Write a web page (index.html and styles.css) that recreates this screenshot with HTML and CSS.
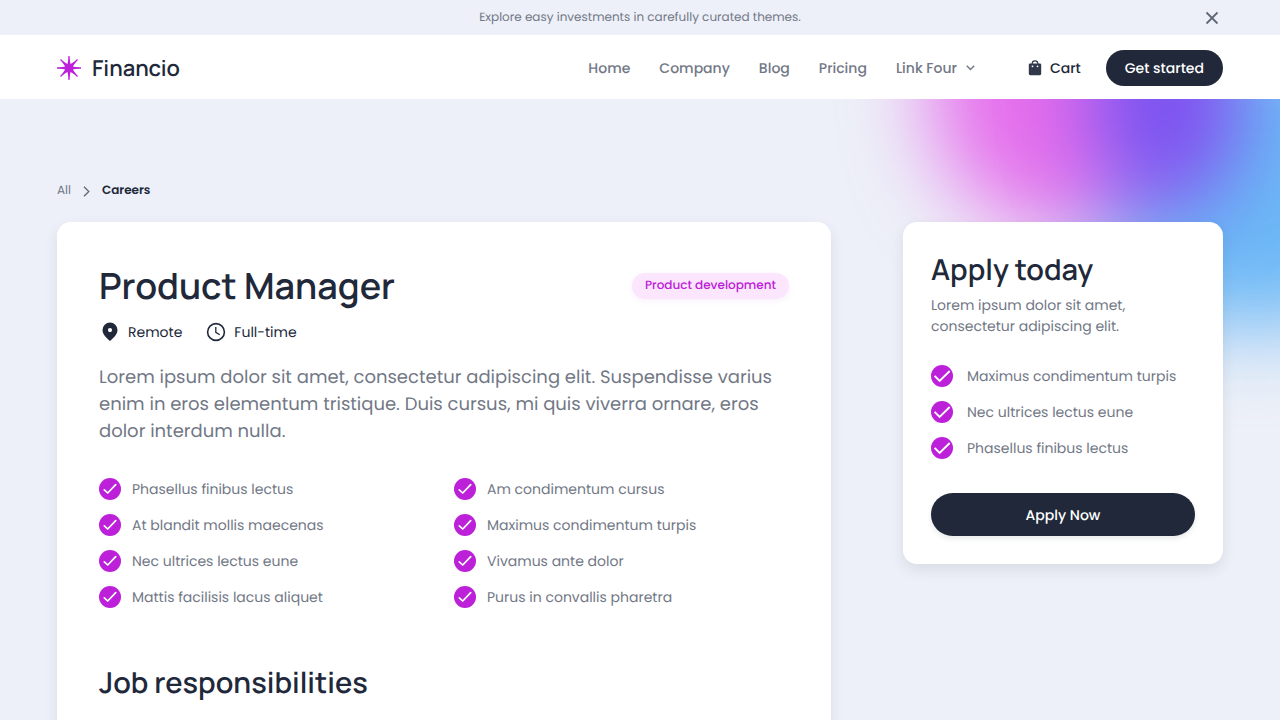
FILE: index.html
```html
<!DOCTYPE html>
<html lang="en">
<head>
<meta charset="utf-8">
<meta name="viewport" content="width=device-width, initial-scale=1">
<title>Product Manager – Financio</title>
<link rel="stylesheet" href="styles.css">
</head>
<body>
<svg class="sprite" aria-hidden="true">
  <symbol id="check" viewBox="0 0 22 22"><circle cx="11" cy="11" r="11" fill="#bc20d8"/><path d="M5.3 11.8l3.4 3.2 8-8.4" fill="none" stroke="#fff" stroke-width="1.7" stroke-linecap="round" stroke-linejoin="round"/></symbol>
  <symbol id="check-large" viewBox="0 0 22 22"><circle cx="11" cy="11" r="11" fill="#bc20d8"/><path d="M3.6 10.9l5 5.1L18.7 6" fill="none" stroke="#fff" stroke-width="1.9"/></symbol>
</svg>
<div class="announce">
  <p class="announce-text">Explore easy investments in carefully curated themes.</p>
  <button class="announce-close" type="button" aria-label="Close"><svg width="14" height="14" viewBox="0 0 14 14"><path d="M1.5 1.5l11 11M12.5 1.5l-11 11" stroke="#606776" stroke-width="1.8"/></svg></button>
</div>
<header class="header">
  <a class="brand" href="#">
    <svg width="24" height="24" viewBox="0 0 24 24" fill="#bc20d8" stroke="#bc20d8"><path d="M12 0v24M0 12h24M3.500 3.500l17 17M20.500 3.500l-17 17" stroke-width="1.300"/><path stroke="none" d="M12 1l1.600 7.100 6.200-3.900-3.900 6.200L23 12l-7.100 1.600 3.900 6.200-6.200-3.900L12 23l-1.600-7.100-6.200 3.900 3.900-6.200L1 12l7.100-1.600-3.900-6.200 6.200 3.900z"/></svg>
    <span class="brand-name">Financio</span>
  </a>
  <nav class="nav">
    <a href="#">Home</a>
    <a href="#">Company</a>
    <a href="#">Blog</a>
    <a href="#">Pricing</a>
    <button class="nav-menu" type="button">Link Four<svg width="9" height="6" viewBox="0 0 9 6"><path d="M.8.8l3.700 3.700L8.200.8" fill="none" stroke="#727886" stroke-width="1.500"/></svg></button>
  </nav>
  <a class="cart" href="#"><svg width="14" height="16" viewBox="0 0 14 16"><path d="M4.200 5V3.600a2.800 2.800 0 0 1 5.600 0V5" fill="none" stroke="#30384a" stroke-width="1.300"/><path d="M2 3.600h10a1.200 1.200 0 0 1 1.200 1.200v9a1.400 1.400 0 0 1-1.400 1.400H2.200a1.400 1.400 0 0 1-1.400-1.400v-9A1.200 1.200 0 0 1 2 3.600z" fill="#30384a"/><circle cx="4.500" cy="6.300" r=".9" fill="#fff"/><circle cx="9.500" cy="6.300" r=".9" fill="#fff"/></svg>Cart</a>
  <a class="button button-small" href="#">Get started</a>
</header>
<main class="page">
  <div class="glow" aria-hidden="true"><i class="blob blob-blue"></i><i class="blob blob-pink"></i><i class="blob blob-purple"></i></div>
  <nav class="crumbs" aria-label="Breadcrumb">
    <a href="#">All</a>
    <svg width="7" height="11" viewBox="0 0 7 11"><path d="M1 .8l4.800 4.700L1 10.200" fill="none" stroke="#606776" stroke-width="1.300"/></svg>
    <a class="current" href="#">Careers</a>
  </nav>
  <div class="columns">
    <article class="card job">
      <div class="job-head">
        <h1>Product Manager</h1>
        <span class="tag">Product development</span>
      </div>
      <div class="meta">
        <span class="meta-item"><svg width="22" height="22" viewBox="0 0 22 22"><path fill-rule="evenodd" d="M11 1.600a7.500 7.500 0 0 0-7.500 7.500c0 4.400 4.400 8.300 7.500 11 3.100-2.700 7.500-6.600 7.500-11A7.500 7.500 0 0 0 11 1.600zm0 5.400a2.100 2.100 0 1 1 0 4.200 2.100 2.100 0 0 1 0-4.200z" fill="#20283a"/></svg>Remote</span>
        <span class="meta-item"><svg width="22" height="22" viewBox="0 0 22 22" fill="none" stroke="#20283a"><circle cx="11" cy="11" r="8.400" stroke-width="1.600"/><path d="M10.800 6v5.400l4 2.400" stroke-width="1.300"/></svg>Full-time</span>
      </div>
      <p class="lead">Lorem ipsum dolor sit amet, consectetur adipiscing elit. Suspendisse varius enim in eros elementum tristique. Duis cursus, mi quis viverra ornare, eros dolor interdum nulla.</p>
      <ul class="checks checks-split">
        <li><svg class="tick"><use href="#check"/></svg>Phasellus finibus lectus</li>
        <li><svg class="tick"><use href="#check"/></svg>Am condimentum cursus</li>
        <li><svg class="tick"><use href="#check"/></svg>At blandit mollis maecenas</li>
        <li><svg class="tick"><use href="#check"/></svg>Maximus condimentum turpis</li>
        <li><svg class="tick"><use href="#check"/></svg>Nec ultrices lectus eune</li>
        <li><svg class="tick"><use href="#check"/></svg>Vivamus ante dolor</li>
        <li><svg class="tick"><use href="#check"/></svg>Mattis facilisis lacus aliquet</li>
        <li><svg class="tick"><use href="#check"/></svg>Purus in convallis pharetra</li>
      </ul>
      <h2 class="section-title">Job responsibilities</h2>
    </article>
    <aside class="card apply">
      <h2>Apply today</h2>
      <p class="apply-text">Lorem ipsum dolor sit amet, consectetur adipiscing elit.</p>
      <ul class="checks checks-apply">
        <li><svg class="tick"><use href="#check-large"/></svg>Maximus condimentum turpis</li>
        <li><svg class="tick"><use href="#check-large"/></svg>Nec ultrices lectus eune</li>
        <li><svg class="tick"><use href="#check-large"/></svg>Phasellus finibus lectus</li>
      </ul>
      <a class="button button-wide" href="#">Apply Now</a>
    </aside>
  </div>
</main>
</body>
</html>
```
FILE: styles.css
```css
* { box-sizing: border-box; }
body {
  margin: 0;
  background: #edf0f8;
  color: #20283a;
  font-family: Poppins, Inter, "Liberation Sans", sans-serif;
  font-size: 14px;
  line-height: 22px;
  text-rendering: geometricPrecision;
}
h1, h2, p, ul { margin: 0; padding: 0; }
ul { list-style: none; }
a { color: inherit; text-decoration: none; }
button { border: 0; padding: 0; background: none; color: inherit; font: inherit; cursor: pointer; }
svg { flex: none; }
h1, h2, .brand-name { font-family: Manrope, Inter, "Liberation Sans", sans-serif; font-weight: 600; }
.sprite { position: absolute; width: 0; height: 0; }

.announce {
  display: grid;
  grid-template-columns: 14px 1fr 14px;
  align-items: center;
  padding: 7px 61px 6px;
  background: #edf0f8;
}
.announce-text { grid-column: 2; text-align: center; font-size: 12px; color: #727886; }
.announce-close { display: flex; }

.header {
  position: relative;
  z-index: 1;
  display: flex;
  align-items: center;
  padding: 15px 57px 13px;
  background: #fff;
}
.brand { display: flex; align-items: center; gap: 11px; margin-right: auto; }
.brand-name { font-size: 22px; line-height: 36px; }
.nav { display: flex; align-items: center; gap: 29px; color: #727886; font-weight: 500; }
.nav-menu { display: flex; align-items: center; gap: 9px; }
.cart { display: flex; align-items: center; gap: 8px; margin: 0 25px 0 53px; font-weight: 500; }
.button { display: block; border-radius: 24px; background: #20283a; color: #fff; font-weight: 500; text-align: center; }
.button-small { padding: 7px 19px; }
.button-wide { margin-top: 34px; padding: 11px 18px 10px; box-shadow: 0 3px 5px #20283a18; }

.page { position: relative; overflow: hidden; padding: 81px 57px 64px; }
.glow { position: absolute; top: 0; right: 0; width: 440px; height: 340px; }
.blob { position: absolute; border-radius: 50%; filter: blur(42px); }
.blob-blue { top: -70px; right: -150px; width: 350px; height: 300px; background: #6cb8f6; }
.blob-pink { top: -150px; right: 100px; width: 250px; height: 280px; background: #e56eec; }
.blob-purple { top: -110px; right: 40px; width: 150px; height: 220px; background: #7a50f0; }

.crumbs { position: relative; display: flex; align-items: center; gap: 12px; font-size: 12px; color: #727886; }
.current { color: #20283a; font-weight: 600; }
.columns {
  position: relative;
  display: grid;
  grid-template-columns: minmax(0, 1fr) 320px;
  gap: 72px;
  align-items: start;
  margin-top: 20px;
}
.card { border-radius: 14px; background: #fff; box-shadow: 0 6px 14px #20283a18; }
.job { padding: 41px 42px 80px; }
.job-head { display: flex; align-items: center; justify-content: space-between; }
h1 { font-size: 36px; line-height: 46px; }
.tag { padding: 2px 13px; border-radius: 13px; background: #fbe6fd; color: #bc20d8; font-size: 12px; font-weight: 500; box-shadow: 0 2px 6px #bc20d812; }
.meta { display: flex; gap: 23px; margin-top: 12px; }
.meta-item { display: flex; align-items: center; gap: 7px; }
.lead { margin-top: 21px; font-size: 18px; line-height: 27px; color: #727886; }
.checks { display: grid; row-gap: 14px; color: #727886; }
.checks li { display: flex; align-items: center; gap: 11px; line-height: 22px; }
.tick { width: 22px; height: 22px; }
.checks-split { grid-template-columns: 1fr 1fr; column-gap: 20px; margin-top: 33px; }
.section-title { margin-top: 54px; }
h2 { font-size: 29px; line-height: 40px; }
.apply { padding: 27px 28px 28px; }
.apply-text { margin-top: 6px; line-height: 21px; color: #727886; }
.checks-apply { margin-top: 28px; }
.checks-apply li { gap: 14px; }
```
